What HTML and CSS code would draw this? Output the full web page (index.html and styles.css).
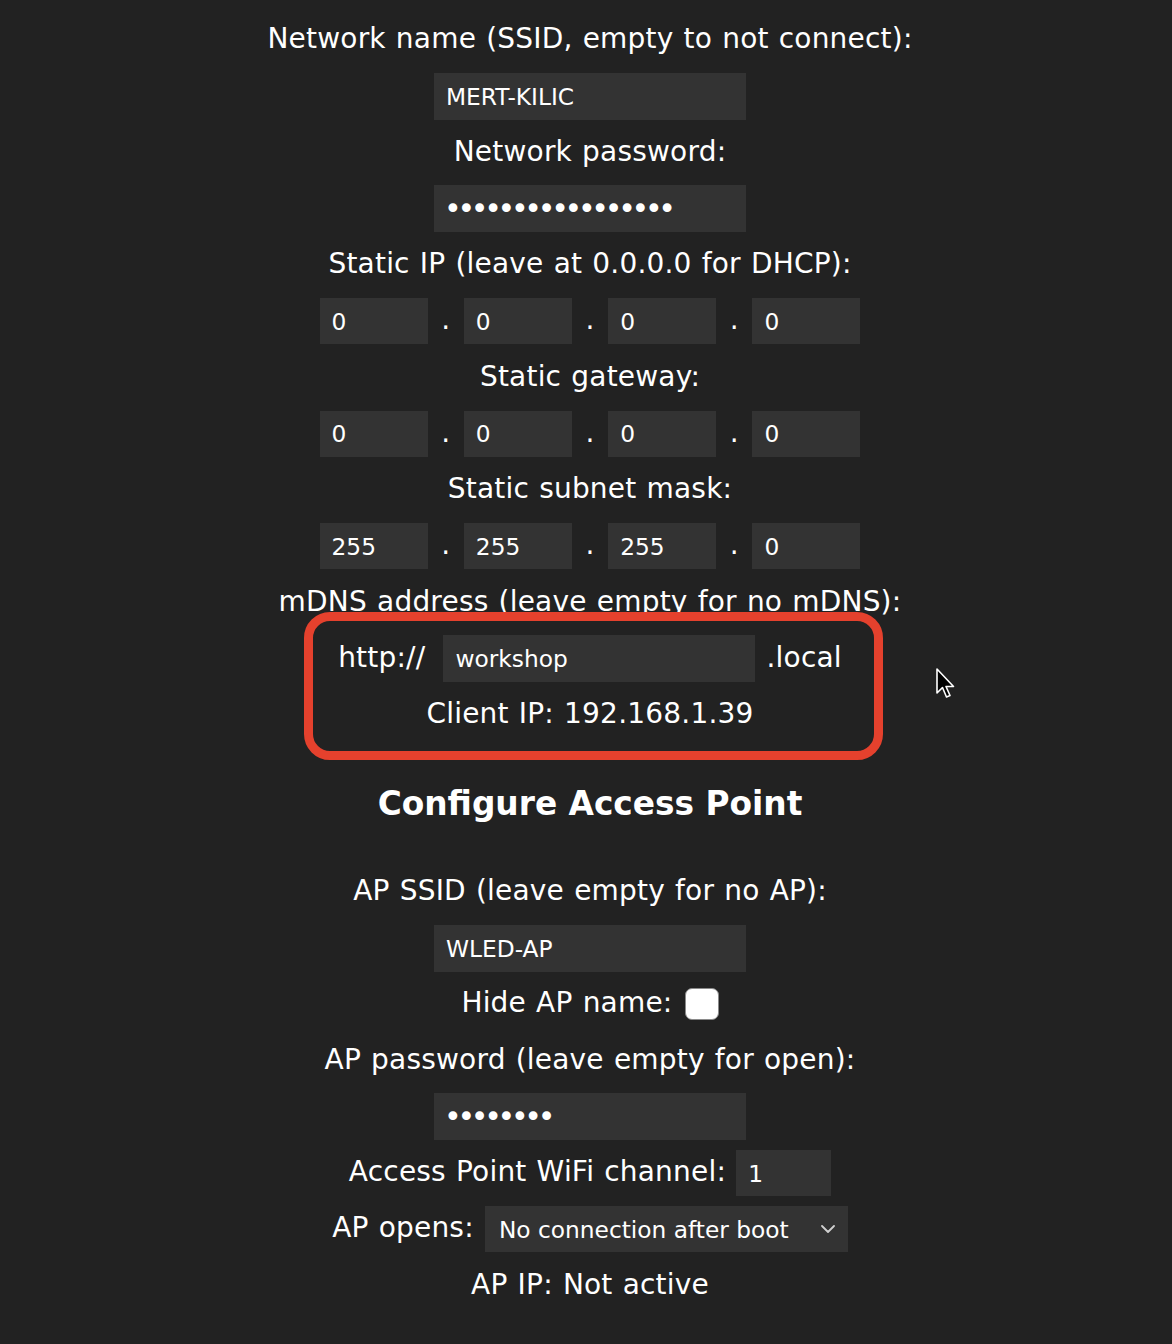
FILE: index.html
```html
<!DOCTYPE html>
<html lang="en">
<head>
    <meta charset="UTF-8">
    <meta name="viewport" content="width=device-width, initial-scale=1.0">
    <title>WiFi Settings</title>
    <link rel="stylesheet" href="styles.css">
</head>
<body>
    <form class="settings">
        Network name (SSID, empty to not connect):<br>
        <input type="text" class="txt" value="MERT-KILIC"><br>
        Network password:<br>
        <input type="password" class="txt" value="xxxxxxxxxxxxxxxxx"><br>
        Static IP (leave at 0.0.0.0 for DHCP):<br>
        <input type="number" class="s" value="0"> . <input type="number" class="s" value="0"> . <input type="number" class="s" value="0"> . <input type="number" class="s" value="0"><br>
        Static gateway:<br>
        <input type="number" class="s" value="0"> . <input type="number" class="s" value="0"> . <input type="number" class="s" value="0"> . <input type="number" class="s" value="0"><br>
        Static subnet mask:<br>
        <input type="number" class="s" value="255"> . <input type="number" class="s" value="255"> . <input type="number" class="s" value="255"> . <input type="number" class="s" value="0"><br>
        mDNS address (leave empty for no mDNS):<br>
        http:// <input type="text" class="txt mdns" value="workshop"> .local<br>
        Client IP: <span class="sip">192.168.1.39</span><br>

        <h3>Configure Access Point</h3>

        AP SSID (leave empty for no AP):<br>
        <input type="text" class="txt" value="WLED-AP"><br>
        Hide AP name: <input type="checkbox" class="chk"><br>
        AP password (leave empty for open):<br>
        <input type="password" class="txt" value="xxxxxxxx"><br>
        Access Point WiFi channel: <input type="number" class="xs" value="1"><br>
        AP opens: <span class="sel">
            <select>
                <option>No connection after boot</option>
                <option>Disconnected</option>
                <option>Always</option>
                <option>Never (not recommended)</option>
            </select>
            <svg class="chevron" width="14" height="8" viewBox="0 0 14 8"><path d="M1 1 L7 7 L13 1" fill="none" stroke="#d0d0d0" stroke-width="1.8" stroke-linecap="round" stroke-linejoin="round"/></svg>
        </span><br>
        AP IP: <span class="sip">Not active</span><br>
    </form>

    <!-- annotation drawn over the screenshot -->
    <div class="highlight"></div>
    <svg class="cursor" width="22" height="34" viewBox="0 0 22 34">
        <path d="M2 2 L2 26 L7.5 20.5 L11.5 30 L15 28.5 L11 19.5 L18.5 19.5 Z" fill="#000" stroke="#fff" stroke-width="1.6" stroke-linejoin="round"/>
    </svg>
</body>
</html>
```

FILE: styles.css
```css
/* Style global */
body {
    font-family: Verdana, "DejaVu Sans", sans-serif;
    font-size: 28px;
    line-height: 56.25px;
    letter-spacing: 0.2px;
    word-spacing: 1px;
    background: #222;
    color: #fff;
    text-align: center;
    margin: 0;
    padding: 11px 0 0 8px;
}

h3 {
    font-size: 32.8px;
    line-height: 65.6px;
    margin: 30px 0 25px;
    letter-spacing: 0;
    word-spacing: 0;
}

input, select {
    font-family: Verdana, "DejaVu Sans", sans-serif;
    font-size: 23.3px;
    letter-spacing: 0;
    word-spacing: 0;
    background: #333;
    color: #fff;
    border: none;
    outline: none;
    border-radius: 0;
    box-sizing: border-box;
    height: 46px;
    padding: 0 12px;
    margin: 0;
    vertical-align: middle;
    text-align: left;
}

/* points du mot de passe */
input[type="password"] {
    font-size: 30px;
    letter-spacing: -4.3px;
    padding-left: 10px;
}

input::-webkit-inner-spin-button,
input::-webkit-outer-spin-button {
    -webkit-appearance: none;
    margin: 0;
}

input[type="number"] {
    -moz-appearance: textfield;
}

.txt {
    width: 312px;
    height: 47px;
}

.mdns {
    margin: 0 1px 0 8px;
}

.s {
    width: 108px;
    margin: 0 3.5px;
}

.xs {
    width: 95px;
}

.chk {
    -webkit-appearance: none;
    appearance: none;
    width: 34px;
    height: 32px;
    padding: 0;
    margin: 0 0 0 2px;
    background: #fff;
    border: 1px solid #8a8a8a;
    border-radius: 7px;
}

.sel {
    position: relative;
    display: inline-block;
    vertical-align: middle;
    line-height: 0;
    margin-left: 1px;
}

.sel select {
    -webkit-appearance: none;
    appearance: none;
    width: 363px;
    padding: 0 14px;
}

.chevron {
    position: absolute;
    right: 13px;
    top: 19px;
}

/* cadre rouge d'annotation */
.highlight {
    position: absolute;
    left: 304px;
    top: 612px;
    width: 579px;
    height: 148px;
    box-sizing: border-box;
    border: 9px solid #e5412d;
    border-radius: 26px;
    pointer-events: none;
}

.cursor {
    position: absolute;
    left: 935px;
    top: 667px;
}
```
